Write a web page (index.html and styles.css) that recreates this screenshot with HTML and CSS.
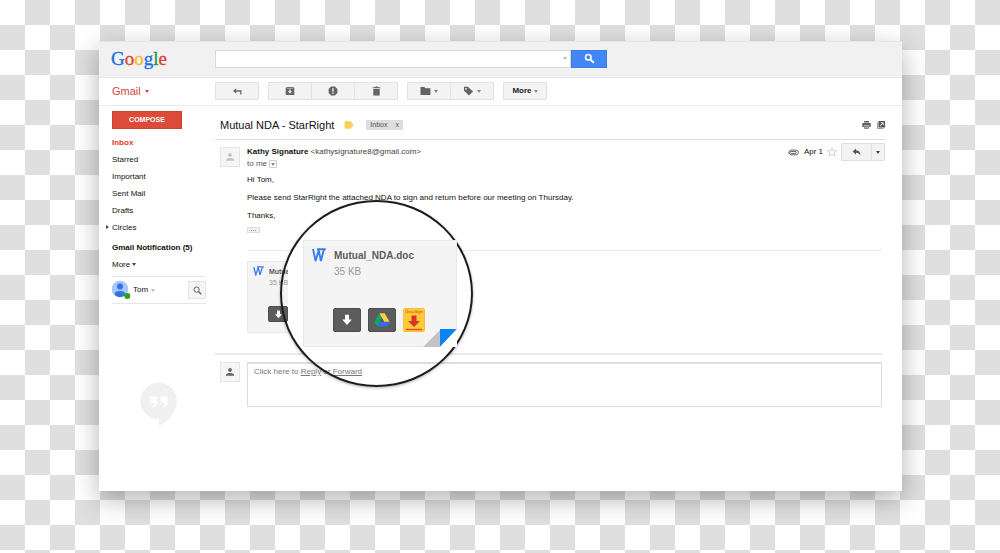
FILE: index.html
```html
<!DOCTYPE html>
<html lang="en">
<head>
<meta charset="utf-8">
<title>Gmail</title>
<link rel="stylesheet" href="styles.css">
</head>
<body>
<div class="window">
  <header class="topbar">
    <a class="logo" href="#"><span class="blue">G</span><span class="red">o</span><span class="yellow">o</span><span class="blue">g</span><span class="green">l</span><span class="red">e</span></a>
    <form class="search">
      <div class="search-field">
        <input type="text" aria-label="Search mail">
        <span class="caret pale"></span>
      </div>
      <button class="search-button" type="button" aria-label="Search">
        <svg width="11" height="11" viewBox="0 0 11 11"><circle cx="4.3" cy="4.3" r="2.8" fill="none" stroke="#fff" stroke-width="1.5"/><path d="M6.5 6.5L9.8 9.8" stroke="#fff" stroke-width="1.9"/></svg>
      </button>
    </form>
  </header>

  <div class="toolbar">
    <button class="brand" type="button">Gmail <span class="caret"></span></button>
    <div class="tools">
      <div class="group">
        <button class="tool" type="button" aria-label="Back to inbox">
          <svg width="11" height="9" viewBox="0 0 11 9"><path d="M1 4L4.2 1.2V3.3H9.5V7.4H8.2V4.8H4.2V6.8Z" fill="#666"/></svg>
        </button>
      </div>
      <div class="group">
        <button class="tool" type="button" aria-label="Archive">
          <svg width="10" height="10" viewBox="0 0 10 10"><path d="M1.700 1H8.300L9.300 2.600V9H.7V2.600Z" fill="#636363"/><path d="M1.800 2.300H8.200" stroke="#ddd" stroke-width=".6"/><path d="M4.300 3.600H5.700V5.300H7.200L5 7.600L2.800 5.300H4.300Z" fill="#f3f3f3"/></svg>
        </button>
        <button class="tool" type="button" aria-label="Report spam">
          <svg width="10" height="10" viewBox="0 0 10 10"><path d="M3.100.6H6.900L9.400 3.100V6.900L6.900 9.400H3.100L.6 6.900V3.100Z" fill="#636363"/><path d="M4.300 2.200H5.700V5.600H4.300ZM4.300 6.500H5.700V7.800H4.300Z" fill="#f3f3f3"/></svg>
        </button>
        <button class="tool" type="button" aria-label="Delete">
          <svg width="9" height="10" viewBox="0 0 9 10"><path d="M.7 1.200H3L3.500.4H5.500L6 1.200H8.300V2.300H.7ZM1.300 3H7.700V9.600H1.300Z" fill="#636363"/></svg>
        </button>
      </div>
      <div class="group">
        <button class="tool" type="button" aria-label="Move to">
          <svg width="11" height="10" viewBox="0 0 11 10"><path d="M.5 1H4.400L5.500 2.300H10.400V9H.5Z" fill="#636363"/></svg>
          <span class="caret"></span>
        </button>
        <button class="tool" type="button" aria-label="Labels">
          <svg width="11" height="10" viewBox="0 0 11 10"><path d="M1 .8H4.800L10 5.400L6 9.600L1 4.800Z" fill="#636363"/><circle cx="3" cy="2.800" r=".9" fill="#f3f3f3"/></svg>
          <span class="caret"></span>
        </button>
      </div>
      <div class="group">
        <button class="tool more" type="button">More <span class="caret"></span></button>
      </div>
    </div>
  </div>

  <div class="body">
    <aside class="sidebar">
      <button class="compose" type="button">COMPOSE</button>
      <nav class="folders">
        <a class="current" href="#">Inbox</a>
        <a href="#">Starred</a>
        <a href="#">Important</a>
        <a href="#">Sent Mail</a>
        <a href="#">Drafts</a>
        <a class="circles" href="#">Circles</a>
      </nav>
      <nav class="labels">
        <a class="unread" href="#">Gmail Notification (5)</a>
        <a href="#">More <span class="caret dark"></span></a>
      </nav>
      <div class="person">
        <svg width="20" height="20" viewBox="0 0 20 20"><circle cx="8" cy="9" r="8.300" fill="#a6c6fc"/><circle cx="8" cy="6.500" r="3" fill="#3573e2"/><path d="M2.800 15V13.500C3 10.200 13 10.200 13.200 13.500V15C10.500 17.800 5.500 17.800 2.800 15Z" fill="#3573e2"/><circle cx="15.300" cy="16" r="3" fill="#2ba316"/></svg>
        <span>Tom</span><span class="caret pale"></span>
        <button class="find" type="button" aria-label="Search people">
          <svg width="9" height="9" viewBox="0 0 9 9"><circle cx="3.600" cy="3.600" r="2.600" fill="none" stroke="#666" stroke-width="1"/><path d="M5.500 5.500L8.300 8.300" stroke="#666" stroke-width="1.400"/></svg>
        </button>
      </div>
      <svg class="hangouts" width="37" height="45" viewBox="0 0 37 45"><path d="M18.500.7A18 18 0 0 0 18.700 37V44C29 39 36.800 29.500 36.800 18.700A18.300 18 0 0 0 18.500.7Z" fill="#f0f0f0"/><path d="M10 14.500H17V21.500Q16.500 25 12.800 25.500V23.500Q14.500 23 14.500 21.300H10ZM20.500 14.500H27.500V21.500Q27 25 23.300 25.500V23.500Q25 23 25 21.300H20.500Z" fill="#fff"/></svg>
    </aside>

    <main class="mail">
      <div class="subject">
        <h1>Mutual NDA - StarRight</h1>
        <svg width="10" height="8" viewBox="0 0 10 8"><path d="M1 .7H6.500L9.200 4L6.500 7.300H1Z" fill="#fbd15b" stroke="#efbd45" stroke-width=".6"/></svg>
        <span class="tag">Inbox <button type="button" aria-label="Remove label Inbox">x</button></span>
        <div class="subject-actions">
          <button type="button" aria-label="Print"><svg width="9" height="8" viewBox="0 0 9 8"><path d="M2 0H7V1.500H2ZM.3 2H8.700V6H7.200V4.500H1.800V6H.3ZM2.300 5H6.700V7.800H2.300Z" fill="#606060"/><path d="M3 6.200H6" stroke="#eee" stroke-width=".8"/></svg></button>
          <button type="button" aria-label="Open in new window"><svg width="8" height="8" viewBox="0 0 8 8"><path d="M1.500 0H8V6.500H1.500Z" fill="#555"/><path d="M.4 1.500V7.600H6.500" fill="none" stroke="#777" stroke-width=".8"/><path d="M3 5L5.800 2.200M3.800 1.800H6.200V4.200" fill="none" stroke="#fff" stroke-width=".9"/></svg></button>
        </div>
      </div>

      <article class="message">
        <div class="avatar"><svg width="10" height="10" viewBox="0 0 10 10"><circle cx="5" cy="3" r="1.900" fill="#c4c4c4"/><path d="M1 8.800V7.500C2 5.500 8 5.500 9 7.500V8.800Z" fill="#c4c4c4"/></svg></div>
        <div class="content">
          <div class="sender">
            <div>
              <p class="from"><b>Kathy Signature</b> &lt;kathysignature8@gmail.com&gt;</p>
              <p class="to">to me <button type="button" aria-label="Show details"><span class="caret"></span></button></p>
            </div>
            <div class="meta">
              <svg width="11" height="7" viewBox="0 0 11 7"><path d="M3 4.400H7.500A1 1 0 0 0 7.500 2.500H3.200A1.500 1.500 0 0 0 3.200 5.800H8A2.300 2.300 0 0 0 8 1.100H3.200A2.500 2.500 0 0 0 1 4.500" fill="none" stroke="#555" stroke-width=".9"/></svg>
              <span>Apr 1</span>
              <button class="star" type="button" aria-label="Star"><svg width="10" height="10" viewBox="0 0 10 10"><path d="M5 .8L6.200 3.700L9.400 3.900L7 6L7.800 9.100L5 7.400L2.200 9.100L3 6L.6 3.900L3.800 3.700Z" fill="#fff" stroke="#bbb" stroke-width=".7"/></svg></button>
              <div class="group reply-group">
                <button class="reply-button" type="button" aria-label="Reply"><svg width="9" height="8" viewBox="0 0 9 8"><path d="M.6 3.400L4 .5V2.300C7 2.500 8.300 4.500 8.500 7.300C7.500 5.500 6.200 4.700 4 4.700V6.400Z" fill="#555"/></svg></button>
                <button class="reply-menu" type="button" aria-label="More actions"><span class="caret dark"></span></button>
              </div>
            </div>
          </div>
          <div class="text">
            <p>Hi Tom,</p>
            <p>Please send StarRight the attached NDA to sign and return before our meeting on Thursday.</p>
            <p>Thanks,</p>
          </div>
          <button class="trimmed" type="button" aria-label="Show trimmed content"><i></i><i></i><i></i></button>
          <section class="attachments">
            <div class="file small">
              <div class="file-head">
                <svg width="11" height="10" viewBox="0 0 14 14" preserveAspectRatio="none"><path d="M1 1.500L3.600 12.500L6.700 2L8.900 12.500L12 1.500M5 1.300H13.800" fill="none" stroke="#3b7ded" stroke-width="1.700"/></svg>
                <div><b>Mutual_NDA.doc</b><span>35 KB</span></div>
              </div>
              <div class="file-actions"><button type="button" aria-label="Download"><svg width="9" height="9" viewBox="0 0 12 12"><path d="M4 .8H8V5.500H10.800L6 11L1.200 5.500H4Z" fill="#fff"/></svg></button></div>
            </div>
            <div class="lens">
              <div class="file large">
                <div class="file-head">
                  <svg width="14" height="14" viewBox="0 0 14 14"><path d="M1 1L3.600 13L6.700 2L8.900 13L12 1M5 1.300H13.800" fill="none" stroke="#3b7ded" stroke-width="1.900"/></svg>
                  <div><b>Mutual_NDA.doc</b><span>35 KB</span></div>
                </div>
                <div class="file-actions">
                  <button type="button" aria-label="Download"><svg width="12" height="12" viewBox="0 0 12 12"><path d="M4 .8H8V5.500H10.800L6 11L1.200 5.500H4Z" fill="#fff"/></svg></button>
                  <button type="button" aria-label="Save to Drive"><svg width="16" height="14" viewBox="0 0 16 14"><path d="M5.400.3L8 4.700L3.200 13.500L.3 8.900Z" fill="#0da960"/><path d="M5.400.3H10.600L15.600 8.700H10.300Z" fill="#ffcf48"/><path d="M5.900 9H15.600L13 13.600H3.200Z" fill="#2e70f0"/></svg></button>
                  <button class="sign" type="button"><span>DocuSign</span><svg width="18" height="17" viewBox="0 0 18 17"><path d="M6.500 1.500H11.500V7H15L9 13L3 7H6.500Z" fill="#d9361c"/><path d="M1 15.500H17" stroke="#e0501f" stroke-width="1.400"/></svg></button>
                </div>
                <svg class="fold" width="34" height="18" viewBox="0 0 34 18"><path d="M0 18L17 1V18Z" fill="#c3c3c3"/><path d="M17 0H34L17 18Z" fill="#0a84f5"/><path d="M34 0V18H17Z" fill="#fff"/></svg>
              </div>
            </div>
          </section>
        </div>
      </article>

      <div class="reply">
        <div class="avatar"><svg width="10" height="10" viewBox="0 0 10 10"><circle cx="5" cy="3" r="1.900" fill="#666"/><path d="M1 8.800V7.500C2 5.500 8 5.500 9 7.500V8.800Z" fill="#666"/></svg></div>
        <div class="reply-box">Click here to <a href="#">Reply</a> or <a href="#">Forward</a></div>
      </div>
    </main>
  </div>
</div>
</body>
</html>
```
FILE: styles.css
```css
* { box-sizing: border-box; }
body {
  margin: 0;
  min-height: 100vh;
  padding: 41px 98px 62px 99px;
  font: 8px/12px "Liberation Sans", Arial, sans-serif;
  color: #111;
  background: conic-gradient(#fff 25%, #dfdfdf 0 50%, #fff 0 75%, #dfdfdf 0) 25px 0 / 50px 50px;
  display: flex;
}
h1, p { margin: 0; font-weight: normal; }
a { color: inherit; text-decoration: none; }
button { font: inherit; color: inherit; border: 0; padding: 0; background: none; display: flex; align-items: center; justify-content: center; }
svg { display: block; flex: none; }

.window {
  flex: 1;
  min-width: 0;
  display: flex;
  flex-direction: column;
  background: #fff;
  box-shadow: 0 8px 24px rgba(0, 0, 0, .3);
}
.caret { display: inline-block; border: 2px solid transparent; border-top: 3px solid #888; border-bottom: 0; flex: none; }
.caret.pale { border-top-color: #bbb; }
.caret.dark { border-top-color: #444; vertical-align: middle; }

.topbar, .toolbar, .body { display: grid; grid-template-columns: 104px minmax(0, 1fr); padding: 0 17px 0 12px; }
.topbar { height: 37px; align-items: center; padding-bottom: 2px; background: #f1f1f1; border-top: 1px solid #e6e6e6; border-bottom: 1px solid #e8e8e8; }
.logo { font: 19px/24px "Liberation Serif", serif; -webkit-text-stroke: .3px; }
.blue { color: #1a6cec; }
.red { color: #dd4132; }
.yellow { color: #fbbb1c; }
.green { color: #189c4c; }
.search { display: flex; width: 392px; max-width: 100%; height: 18px; }
.search-field { flex: 1; display: flex; align-items: center; padding-right: 3px; background: #fff; border: 1px solid #dadada; }
.search-field input { flex: 1; min-width: 0; border: 0; outline: 0; background: none; font: inherit; }
.search-button { width: 36px; background: #4387f5; border: 1px solid #3b7ce6; }

.toolbar { height: 28px; align-items: center; padding-bottom: 1px; border-bottom: 1px solid #ebebeb; }
.brand { justify-content: flex-start; gap: 4px; padding-left: 1px; font-size: 11px; color: #d64537; }
.brand .caret { border-top-color: #d64537; }
.tools { display: flex; gap: 9px; }
.group { display: flex; height: 18px; background: #f3f3f3; border: 1px solid #e0e0e0; border-radius: 1px; }
.tool { width: 42px; gap: 3px; font-weight: bold; color: #222; }
.tool + .tool { width: 43px; border-left: 1px solid #e0e0e0; }
.more { gap: 2px; }

.body { flex: 1; grid-template-columns: 94px minmax(0, 1fr); column-gap: 9px; padding-left: 13px; }
.sidebar { padding-top: 5px; }
.compose { width: 70px; height: 18px; font-size: 7px; font-weight: bold; color: #fff; background: #dc4a38; border: 1px solid #cf4130; }
.folders, .labels { display: grid; grid-auto-rows: 17px; line-height: 17px; }
.folders { margin-top: 5px; }
.labels { margin-top: 3px; }
.current { color: #dd3c2e; font-weight: bold; }
.unread { font-weight: bold; }
.circles::before { content: ""; float: left; margin: 6px 0 0 -6px; border: 2px solid transparent; border-left: 3px solid #444; border-right: 0; }
.circles { margin-right: -6px; }
.person { display: flex; align-items: center; gap: 1px; height: 28px; margin-top: 3px; border: solid #e6e6e6; border-width: 1px 0; }
.person .caret { margin-left: 2px; }
.find { width: 18px; height: 18px; margin-left: auto; background: #f5f5f5; border: 1px solid #e3e3e3; }
.hangouts { margin: 78px 0 0 28px; }

.subject { display: flex; align-items: center; height: 34px; padding: 5px 0 0 5px; border-bottom: 1px solid #ddd; }
.subject h1 { font-size: 11px; line-height: 16px; margin-right: 10px; }
.tag { display: flex; gap: 8px; margin-left: 12px; padding: 0 4px; font-size: 7px; line-height: 10px; color: #555; background: #ddd; }
.subject-actions { display: flex; gap: 6px; margin-left: auto; }

.message { display: grid; grid-template-columns: 20px minmax(0, 1fr); gap: 7px; margin-right: 3px; padding: 3px 0 20px 5px; border-bottom: 2px solid #e8e8e8; }
.avatar { display: flex; align-items: center; justify-content: center; width: 20px; height: 20px; background: #f5f5f5; border: 1px solid #e6e6e6; }
.message .avatar { margin-top: 4px; }
.sender { display: flex; justify-content: space-between; margin-right: -3px; }
.from { padding-top: 3px; color: #444; }
.from b { color: #111; }
.to { display: flex; align-items: center; gap: 2px; color: #555; }
.to button { width: 8px; height: 8px; border: 1px solid #ccc; border-radius: 1px; }
.meta { display: flex; align-items: center; height: 18px; }
.meta > span { margin: 0 4px 0 5px; }
.reply-group { margin-left: 4px; }
.reply-button { width: 29px; }
.reply-menu { width: 13px; border-left: 1px solid #e0e0e0; }
.text { display: grid; gap: 6px; margin-top: 4px; }
.trimmed { width: 13px; height: 6px; margin-top: 5px; gap: 1px; background: #f1f1f1; border: 1px solid #ddd; }
.trimmed i { width: 1px; height: 1px; background: #999; }

.attachments { position: relative; margin-top: 17px; padding-top: 10px; border-top: 1px solid #ebebeb; }
.file { background: #f4f4f4; border: 1px solid #e8e8e8; color: #666; }
.file-head { display: flex; }
.file-head div { display: grid; }
.file-head b { color: #5c5c5c; }
.file-head span { color: #999; }
.file-actions { display: flex; }
.file-actions button { background: #5c5c5c; border: 1px solid #4e4e4e; border-radius: 2px; }
.small { width: 110px; height: 72px; padding: 4px 5px; font-size: 7px; line-height: 11px; }
.small .file-head { gap: 5px; }
.small .file-actions { margin: 18px 0 0 15px; }
.small button { width: 20px; height: 16px; }

/* Magnifier that lies over the attachment row */
.lens {
  position: absolute;
  left: 33px;
  top: -51px;
  width: 193px;
  height: 187px;
  border: 2px solid #1c1c1c;
  border-radius: 50%;
  padding: 38px 0 0 21px;
  background: linear-gradient(#fff, #fff) 6px 40px / 100% 115px no-repeat;
  box-shadow: 0 1px 3px rgba(0, 0, 0, .3);
}
.large { position: relative; width: 154px; height: 107px; padding: 7px 8px; font-size: 10px; line-height: 16px; }
.large .file-head { gap: 8px; }
.large .file-actions { gap: 7px; margin: 28px 0 0 21px; }
.large button { width: 28px; height: 24px; }
.large .sign { width: 22px; flex-direction: column; color: #d9361c; background: #ffc93c; border-color: #f8bf38; }
.sign span { height: 4px; font: italic 4px/4px "Liberation Sans", sans-serif; color: #d9361c; }
.fold { position: absolute; right: -1px; bottom: -1px; }

.reply { display: grid; grid-template-columns: 20px minmax(0, 1fr); gap: 7px; margin-right: 3px; padding: 7px 0 0 5px; }
.reply-box { min-height: 45px; padding: 2px 6px; color: #777; border: 1px solid #ddd; border-top-width: 2px; }
.reply-box a { text-decoration: underline; }
```
